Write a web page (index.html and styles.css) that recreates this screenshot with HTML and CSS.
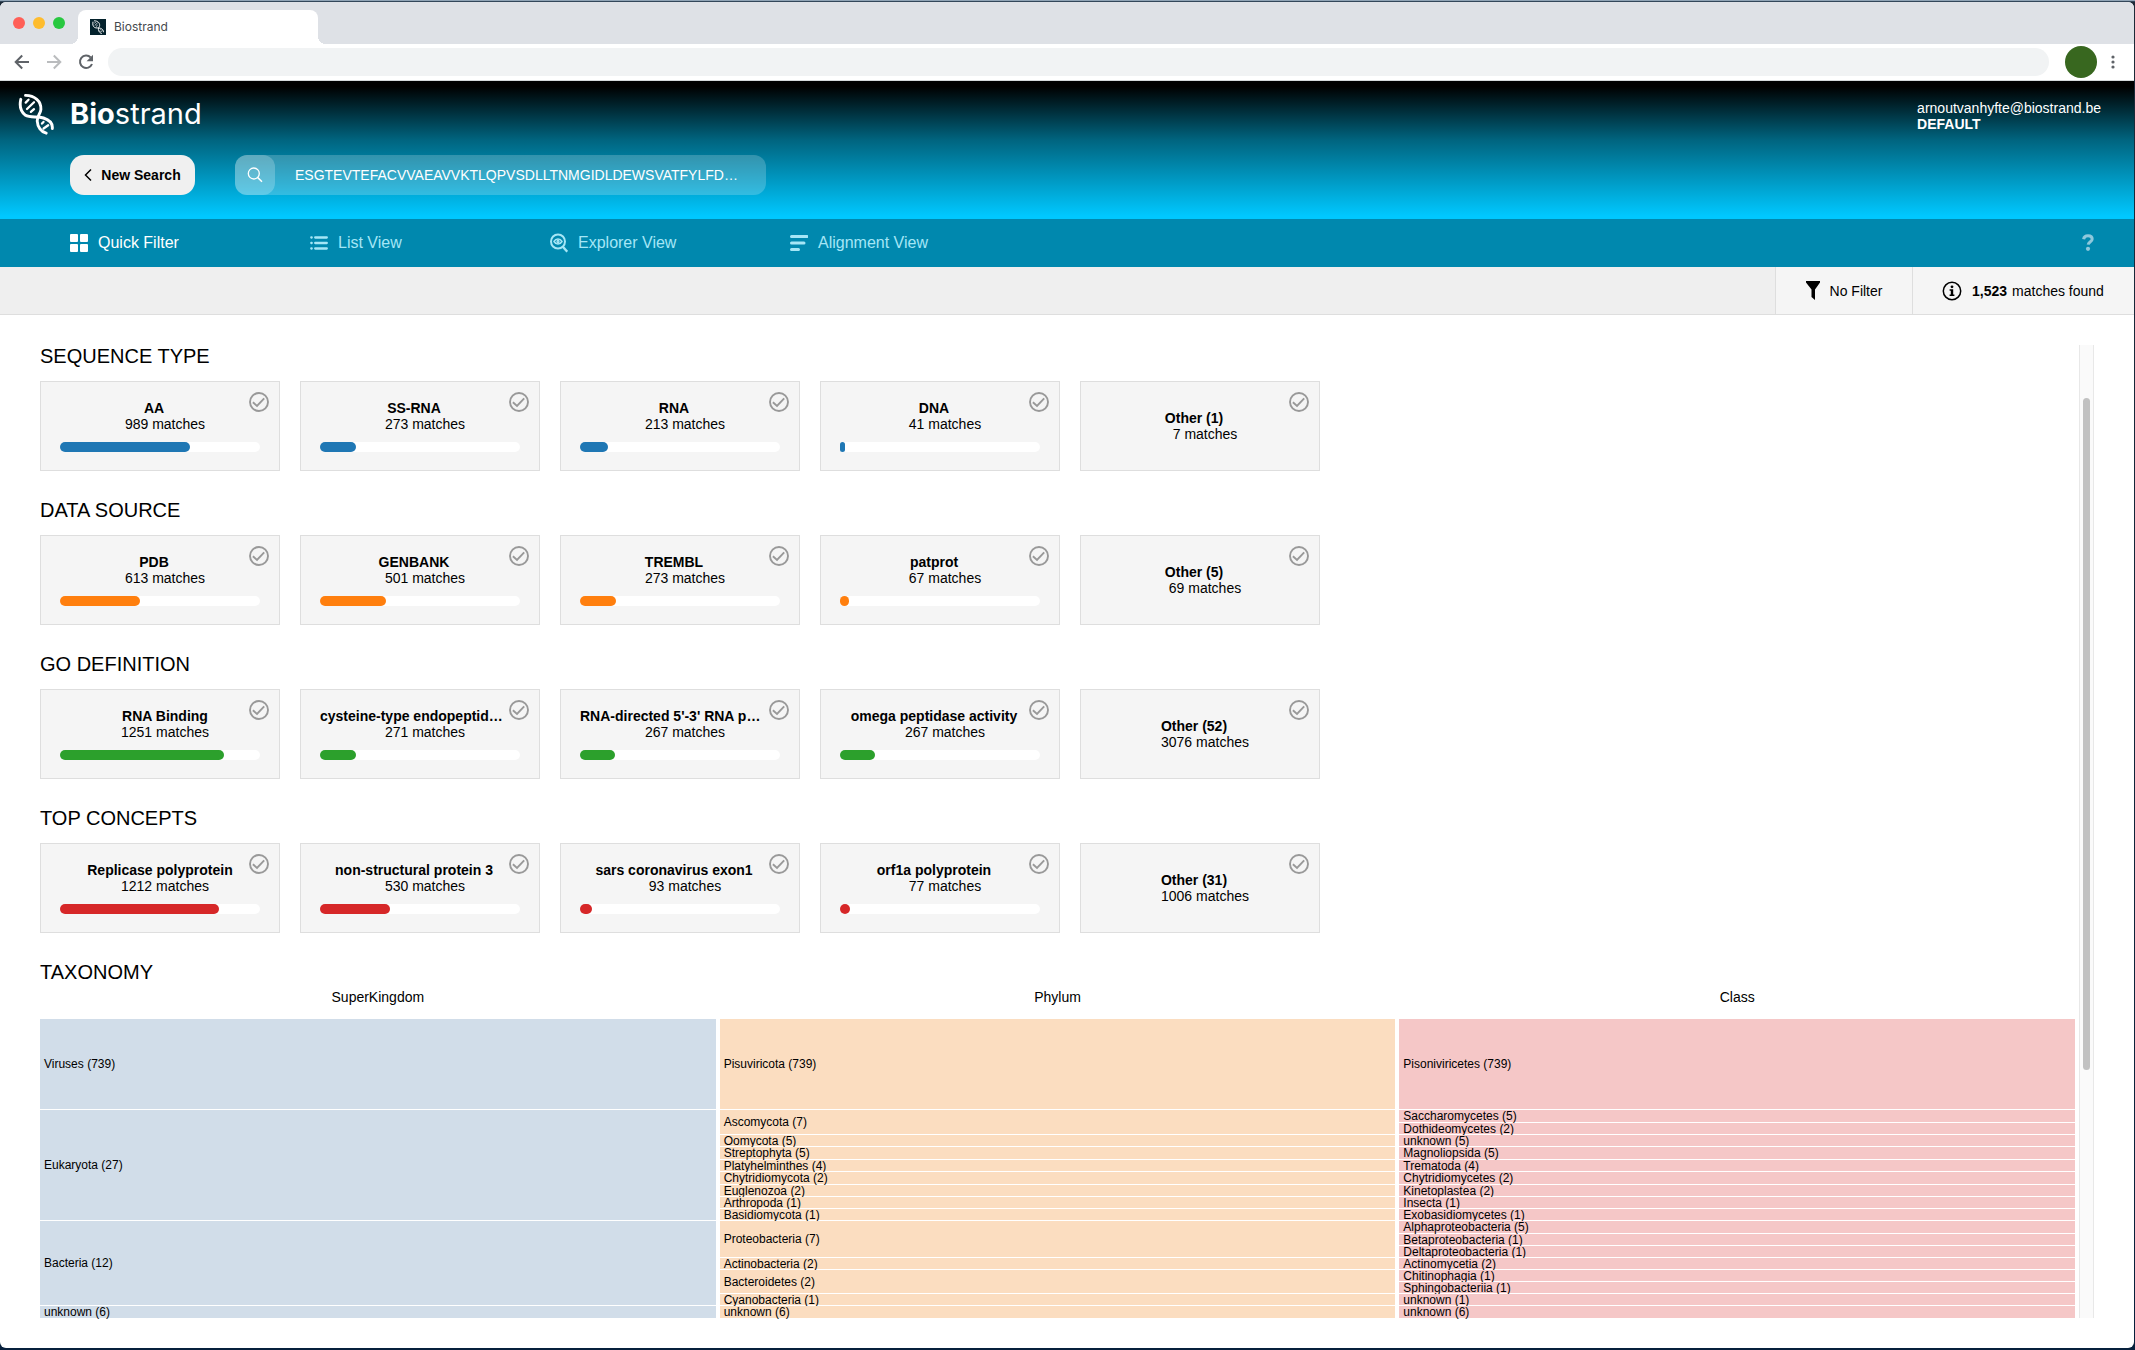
FILE: index.html
```
<!DOCTYPE html>
<html lang="en">
<head>
<meta charset="utf-8">
<title>Biostrand</title>
<link rel="stylesheet" href="styles.css">
</head>
<body>
<svg class="sprite" aria-hidden="true">
  <symbol id="check" viewBox="0 0 20 20"><circle cx="10" cy="10" r="9" fill="none" stroke="currentColor" stroke-width="1.9"/><path d="M3.900 10.200 8 14l7.200-7.600" fill="none" stroke="currentColor" stroke-width="1.900"/></symbol>
  <symbol id="helix" viewBox="0 0 36 42"><g fill="none" stroke="currentColor" stroke-width="2.900" stroke-linecap="round"><path d="M2.800 6.300C1.200 13.500 3 19 7.500 22.300c4.500 2.800 12 .7 18 2.700C31.500 27 34.800 31 34.300 35.500"/><path d="M7.500 2.400C16.500 2.500 23.500 8 22.900 16.500c-.3 4.500-3.900 5.500-3.700 11.500.3 6 4 11 9 12.200"/><path d="M7.700 9.600l2.800-2.900M9 16l7-6.800M12.900 18.900l3.100-2.700M24 30.600l1.500-1.700M25.600 35.500l4.600-3.200" stroke-width="2.300"/></g></symbol>
</svg>
<div class="window">
  <div class="tabs">
    <span class="light close"></span><span class="light minimize"></span><span class="light zoom"></span>
    <div class="tab"><span class="favicon"><svg width="12" height="14"><use href="#helix"/></svg></span>Biostrand</div>
  </div>
  <div class="toolbar">
    <button class="tool" aria-label="Back"><svg width="16" height="16" viewBox="0 0 16 16"><path d="M15 8H2M8.200 1.500 1.700 8l6.500 6.500" fill="none" stroke="#5f6368" stroke-width="2"/></svg></button>
    <button class="tool" aria-label="Forward"><svg width="16" height="16" viewBox="0 0 16 16"><path d="M1 8h13M7.800 1.500 14.300 8l-6.500 6.500" fill="none" stroke="#babcbe" stroke-width="2"/></svg></button>
    <button class="tool" aria-label="Reload"><svg width="16" height="16" viewBox="0 0 16 16"><path d="M12.700 3.500A6.200 6.200 0 1 0 14 10" fill="none" stroke="#5f6368" stroke-width="2"/><path d="M15 .8v6.400H8.600z" fill="#5f6368"/></svg></button>
    <input class="address" type="text" aria-label="Address">
    <span class="avatar"></span>
    <button class="dots" aria-label="Menu"><svg width="4" height="14" viewBox="0 0 4 14"><g fill="#5f6368"><circle cx="2" cy="2" r="1.600"/><circle cx="2" cy="7" r="1.600"/><circle cx="2" cy="12" r="1.600"/></g></svg></button>
  </div>

  <header class="header">
    <div class="brand-row">
      <a class="brand" href="#"><svg width="36" height="42"><use href="#helix"/></svg><span><b>Bio</b>strand</span></a>
      <div class="account">arnoutvanhyfte@biostrand.be<br><b>DEFAULT</b></div>
    </div>
    <div class="search-row">
      <button class="new-search"><svg width="8" height="14" viewBox="0 0 8 14"><path d="M7 1.500 1.500 7 7 12.500" fill="none" stroke="#000" stroke-width="1.500"/></svg>New Search</button>
      <div class="search">
        <button class="search-icon" aria-label="Search"><svg width="16" height="16" viewBox="0 0 16 16"><circle cx="6.800" cy="6.500" r="5.500" fill="none" stroke="#fff" stroke-width="1.300"/><path d="m10.800 10.600 4.200 4.200" stroke="#fff" stroke-width="1.500"/></svg></button>
        <input class="query" type="text" aria-label="Sequence" value="ESGTEVTEFACVVAEAVVKTLQPVSDLLTNMGIDLDEWSVATFYLFD…">
      </div>
    </div>
  </header>

  <nav class="nav">
    <a class="active" href="#"><svg width="18" height="18" viewBox="0 0 18 18" fill="currentColor"><rect width="8" height="8" rx="1"/><rect x="10" width="8" height="8" rx="1"/><rect y="10" width="8" height="8" rx="1"/><rect x="10" y="10" width="8" height="8" rx="1"/></svg>Quick Filter</a>
    <a href="#"><svg width="18" height="18" viewBox="0 0 18 18"><path d="M5.200 3.500h11.600M5.200 9h11.600M5.200 14.500h11.600M1.300 3.500h.4M1.300 9h.4M1.300 14.500h.4" fill="none" stroke="currentColor" stroke-width="2.300" stroke-linecap="round"/></svg>List View</a>
    <a href="#"><svg width="18" height="20" viewBox="0 0 18 20" fill="none" stroke="currentColor"><circle cx="8" cy="8.500" r="7" stroke-width="2"/><path d="m12.800 13.700 4.500 5" stroke-width="2.400"/><path d="M4 8.500c1.900-3.200 6.100-3.200 8 0-1.900 3.200-6.100 3.200-8 0z" stroke-width="1.500"/><circle cx="8" cy="8.500" r="1" stroke-width="1.300"/></svg>Explorer View</a>
    <a href="#"><svg width="18" height="18" viewBox="0 0 18 18"><path d="M1.500 2.500h15.500M1.500 9h12.500M1.500 15.500h7" fill="none" stroke="currentColor" stroke-width="3" stroke-linecap="round"/></svg>Alignment View</a>
    <button class="help" aria-label="Help"><svg width="12" height="18" viewBox="0 0 12 18"><path d="M1.600 5.200C2 2.800 3.600 1.800 6 1.800c2.500 0 4.200 1.200 4.200 3.200 0 2.600-3.700 2.700-4 5.600" fill="none" stroke="currentColor" stroke-width="3"/><circle cx="6" cy="14.800" r="2.100" fill="currentColor"/></svg></button>
  </nav>

  <div class="status">
    <button class="status-item"><svg width="14" height="20" viewBox="0 0 14 20"><path d="M0 0h14v1.500L9 8.500V19l-3.500-3V8.500L0 1.500z"/></svg>No Filter</button>
    <div class="status-item matches-found"><svg width="20" height="20" viewBox="0 0 20 20"><circle cx="10" cy="10" r="8.700" fill="none" stroke="#000" stroke-width="1.500"/><circle cx="10" cy="5.800" r="1.400"/><path d="M7.600 8.300h3.600v5.200h1.200v1.400H7.600v-1.400h1.200V9.700H7.600z"/></svg><span><b>1,523</b>matches found</span></div>
  </div>

  <main class="content">
    <div class="panel">
      <section class="group blue">
        <h2>SEQUENCE TYPE</h2>
        <div class="cards">
          <button class="card"><b>AA</b><span class="count">989 matches</span><span class="track"><i style="width:65%"></i></span><svg class="check"><use href="#check"/></svg></button>
          <button class="card"><b>SS-RNA</b><span class="count">273 matches</span><span class="track"><i style="width:18%"></i></span><svg class="check"><use href="#check"/></svg></button>
          <button class="card"><b>RNA</b><span class="count">213 matches</span><span class="track"><i style="width:14%"></i></span><svg class="check"><use href="#check"/></svg></button>
          <button class="card"><b>DNA</b><span class="count">41 matches</span><span class="track"><i style="width:2.500%"></i></span><svg class="check"><use href="#check"/></svg></button>
          <button class="card other"><b>Other (1)</b><span class="count">7 matches</span><svg class="check"><use href="#check"/></svg></button>
        </div>
      </section>
      <section class="group orange">
        <h2>DATA SOURCE</h2>
        <div class="cards">
          <button class="card"><b>PDB</b><span class="count">613 matches</span><span class="track"><i style="width:40%"></i></span><svg class="check"><use href="#check"/></svg></button>
          <button class="card"><b>GENBANK</b><span class="count">501 matches</span><span class="track"><i style="width:33%"></i></span><svg class="check"><use href="#check"/></svg></button>
          <button class="card"><b>TREMBL</b><span class="count">273 matches</span><span class="track"><i style="width:18%"></i></span><svg class="check"><use href="#check"/></svg></button>
          <button class="card"><b>patprot</b><span class="count">67 matches</span><span class="track"><i style="width:4.500%"></i></span><svg class="check"><use href="#check"/></svg></button>
          <button class="card other"><b>Other (5)</b><span class="count">69 matches</span><svg class="check"><use href="#check"/></svg></button>
        </div>
      </section>
      <section class="group green">
        <h2>GO DEFINITION</h2>
        <div class="cards">
          <button class="card"><b class="shifted">RNA Binding</b><span class="count">1251 matches</span><span class="track"><i style="width:82%"></i></span><svg class="check"><use href="#check"/></svg></button>
          <button class="card"><b class="clipped">cysteine-type endopeptid…</b><span class="count">271 matches</span><span class="track"><i style="width:18%"></i></span><svg class="check"><use href="#check"/></svg></button>
          <button class="card"><b class="clipped">RNA-directed 5'-3' RNA p…</b><span class="count">267 matches</span><span class="track"><i style="width:17.500%"></i></span><svg class="check"><use href="#check"/></svg></button>
          <button class="card"><b>omega peptidase activity</b><span class="count">267 matches</span><span class="track"><i style="width:17.500%"></i></span><svg class="check"><use href="#check"/></svg></button>
          <button class="card other"><b>Other (52)</b><span class="count">3076 matches</span><svg class="check"><use href="#check"/></svg></button>
        </div>
      </section>
      <section class="group crimson">
        <h2>TOP CONCEPTS</h2>
        <div class="cards">
          <button class="card"><b class="nudged">Replicase polyprotein</b><span class="count">1212 matches</span><span class="track"><i style="width:79.500%"></i></span><svg class="check"><use href="#check"/></svg></button>
          <button class="card"><b>non-structural protein 3</b><span class="count">530 matches</span><span class="track"><i style="width:35%"></i></span><svg class="check"><use href="#check"/></svg></button>
          <button class="card"><b>sars coronavirus exon1</b><span class="count">93 matches</span><span class="track"><i style="width:6%"></i></span><svg class="check"><use href="#check"/></svg></button>
          <button class="card"><b>orf1a polyprotein</b><span class="count">77 matches</span><span class="track"><i style="width:5%"></i></span><svg class="check"><use href="#check"/></svg></button>
          <button class="card other"><b>Other (31)</b><span class="count">1006 matches</span><svg class="check"><use href="#check"/></svg></button>
        </div>
      </section>
      <section class="group">
        <h2>TAXONOMY</h2>
        <div class="levels"><h3>SuperKingdom</h3><h3>Phylum</h3><h3>Class</h3></div>
        <div class="tree">
          <div class="k">Viruses (739)</div><div class="p">Pisuviricota (739)</div><div class="c">Pisoniviricetes (739)</div>
          <div class="k" style="grid-row-end:span 9">Eukaryota (27)</div>
          <div class="p" style="grid-row-end:span 2">Ascomycota (7)</div><div class="c">Saccharomycetes (5)</div><div class="c">Dothideomycetes (2)</div>
          <div class="p">Oomycota (5)</div><div class="c">unknown (5)</div>
          <div class="p">Streptophyta (5)</div><div class="c">Magnoliopsida (5)</div>
          <div class="p">Platyhelminthes (4)</div><div class="c">Trematoda (4)</div>
          <div class="p">Chytridiomycota (2)</div><div class="c">Chytridiomycetes (2)</div>
          <div class="p">Euglenozoa (2)</div><div class="c">Kinetoplastea (2)</div>
          <div class="p">Arthropoda (1)</div><div class="c">Insecta (1)</div>
          <div class="p">Basidiomycota (1)</div><div class="c">Exobasidiomycetes (1)</div>
          <div class="k" style="grid-row-end:span 7">Bacteria (12)</div>
          <div class="p" style="grid-row-end:span 3">Proteobacteria (7)</div><div class="c">Alphaproteobacteria (5)</div><div class="c">Betaproteobacteria (1)</div><div class="c">Deltaproteobacteria (1)</div>
          <div class="p">Actinobacteria (2)</div><div class="c">Actinomycetia (2)</div>
          <div class="p" style="grid-row-end:span 2">Bacteroidetes (2)</div><div class="c">Chitinophagia (1)</div><div class="c">Sphingobacteriia (1)</div>
          <div class="p">Cyanobacteria (1)</div><div class="c">unknown (1)</div>
          <div class="k">unknown (6)</div><div class="p">unknown (6)</div><div class="c">unknown (6)</div>
        </div>
      </section>
    </div>
    <div class="scroll"><div class="thumb"></div></div>
  </main>
</div>
</body>
</html>
```
FILE: styles.css
```
* { box-sizing: border-box; }
html { background: #07203c; }
body {
  margin: 0;
  padding: 2px 1px 2px 0;
  min-height: 100vh;
  display: flex;
  font: 14px/16px "Liberation Sans", Arial, sans-serif;
  color: #000;
  background: linear-gradient(#8fa3b5 1px, #33475a 1px, #33475a 2px, #1d2a38 2px, #07203c);
}
button, input { font: inherit; color: inherit; border: 0; padding: 0; margin: 0; background: none; }
a { color: inherit; text-decoration: none; }
svg { flex: none; display: block; }
.sprite { position: absolute; width: 0; height: 0; }

.window { flex: 1; min-width: 0; display: flex; flex-direction: column; background: #fff; border-radius: 6px; overflow: hidden; }

/* Browser frame */
.tabs { height: 42px; background: #dee1e6; display: flex; align-items: center; gap: 8px; padding-left: 13px; }
.light { width: 12px; height: 12px; border-radius: 50%; }
.close { background: #ff5f57; }
.minimize { background: #febc2e; }
.zoom { background: #28c840; }
.tab {
  position: relative; align-self: flex-end; width: 240px; height: 34px; margin-left: 5px; padding: 0 12px;
  display: flex; align-items: center; gap: 8px; background: #fff; border-radius: 8px 8px 0 0;
  font: 12px/16px Inter, sans-serif; color: #45494d;
}
.tab::before, .tab::after { content: ""; position: absolute; bottom: 0; width: 8px; height: 8px; }
.tab::before { left: -8px; background: radial-gradient(circle at 0 0, #dee1e6 8px, #fff 8px); }
.tab::after { right: -8px; background: radial-gradient(circle at 100% 0, #dee1e6 8px, #fff 8px); }
.favicon { width: 16px; height: 16px; background: #04222c; color: #fff; display: flex; align-items: center; justify-content: center; }
.toolbar { height: 37px; padding: 0 19px 0 14px; display: flex; align-items: center; gap: 16px; border-bottom: 1px solid #d5d8da; }
.address { flex: 1; min-width: 0; height: 28px; margin-left: -2px; padding: 0 14px; border-radius: 14px; background: #f1f3f4; }
.avatar { width: 32px; height: 32px; border-radius: 50%; background: #38671f; }
.dots { margin-left: -2px; }

/* Application header */
.header { height: 138px; padding: 12px 33px 0 18px; color: #fff; background: linear-gradient(#000 4%, #006580 43%, #00c8ff 98%); }
.brand-row { display: flex; justify-content: space-between; }
.brand { display: flex; align-items: center; gap: 16px; font: 29px/42px Inter, sans-serif; }
.account { padding-top: 7px; }
.search-row { display: flex; gap: 40px; padding: 20px 0 0 52px; }
.new-search { width: 125px; height: 40px; border-radius: 14px; background: #f0f0f0; color: #000; font-weight: bold; display: flex; align-items: center; justify-content: center; gap: 9px; }
.search { width: 531px; height: 40px; border-radius: 12px; background: #ffffff33; display: flex; }
.search-icon { width: 40px; height: 40px; border-radius: 12px; background: #ffffff38; display: grid; place-items: center; }
.query { flex: 1; min-width: 0; padding: 0 20px; }
.nav { height: 48px; padding: 0 40px 0 70px; background: #0088ae; color: #a5e6f6; font-size: 16px; display: flex; align-items: center; }
.nav a { width: 240px; display: flex; align-items: center; gap: 10px; }
.nav .active { color: #fff; }
.help { margin-left: auto; color: #8fc8dc; }

.status { height: 48px; background: #efefef; border-bottom: 1px solid #dedede; display: flex; justify-content: flex-end; }
.status-item { width: 137px; background: #f5f5f5; border-left: 1px solid #dedede; display: flex; align-items: center; justify-content: center; gap: 10px; }
.matches-found { width: 222px; padding-left: 29px; justify-content: flex-start; }
.matches-found b { margin-right: 5px; }

/* Filter groups */
.content { flex: 1; padding: 30px 40px 30px; display: flex; gap: 4px; }
.panel { flex: 1; min-width: 0; }
h2 { margin: 0; font: 20px/22px "Liberation Sans", Arial, sans-serif; }
.cards { display: flex; gap: 20px; padding: 14px 0 28px; }
.card {
  position: relative; width: 240px; height: 90px; padding: 18px 19px 0; display: flex; flex-direction: column;
  text-align: center; background: #f5f5f5; border: 1px solid #dedede;
}
.card b { width: 188px; white-space: nowrap; }
.card .shifted { padding-left: 22px; }
.card .nudged { padding-left: 12px; }
.card .clipped { text-align: left; }
.count { width: 210px; }
.card.other { padding-top: 28px; }
.track { display: block; height: 10px; margin-top: 10px; border-radius: 5px; background: #fff; }
.track i { display: block; height: 10px; border-radius: 5px; }
.blue i { background: #1f77b4; }
.orange i { background: #ff7f0e; }
.green i { background: #2ca02c; }
.crimson i { background: #d62728; }
.check { position: absolute; top: 10px; right: 10px; width: 20px; height: 20px; color: #999; }

/* Taxonomy chart */
.levels, .tree { display: grid; grid-template-columns: repeat(3, 1fr); column-gap: 4px; }
.levels { height: 36px; padding-top: 6px; }
h3 { margin: 0; font: inherit; text-align: center; }
.tree { grid-template-rows: 91px 13px 12px 12px 13px 12px 13px 12px 12px 12px 13px 12px 12px 12px 12px 12px 12px 12px; grid-auto-flow: column dense; font-size: 12px; line-height: 12px; }
.tree div { padding-left: 4px; display: flex; align-items: center; border-bottom: 1px solid #fff; }
.k { grid-column: 1; background: #d1dde9; }
.p { grid-column: 2; background: #fbddc0; }
.c { grid-column: 3; background: #f5c7c7; }
.tree div:nth-last-child(-n+3) { border-bottom: 0; }

.scroll { width: 15px; padding: 53px 3px 0; background: #fafafa; border: solid #e8e8e8; border-width: 0 1px; }
.thumb { height: 73%; border-radius: 4px; background: #c1c1c1; }
```
